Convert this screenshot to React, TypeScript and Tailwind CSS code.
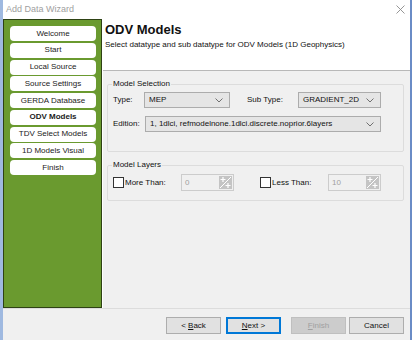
import React from "react";

const font = { fontFamily: '"Liberation Sans", Arial, sans-serif' };

function Chevron() {
  return (
    <svg width="8" height="5" viewBox="0 0 8 5" className="shrink-0">
      <path d="M0.5 0.5 L4 4 L7.5 0.5" fill="none" stroke="#707070" strokeWidth="1" />
    </svg>
  );
}

function Select({ value, className }: { value: string; className: string }) {
  return (
    <div
      className={`h-[16px] flex items-center justify-between bg-[#e5e5e5] border border-[#acacac] pl-[4px] pr-[6px] text-[8px] text-[#111] ${className}`}
    >
      <span>{value}</span>
      <Chevron />
    </div>
  );
}

function SpinIcon() {
  return (
    <svg width="13" height="13" viewBox="0 0 13 13" className="shrink-0">
      <rect x="0" y="0" width="13" height="13" fill="#c4c4c4" />
      <path d="M1 12 L12 1" stroke="#ffffff" strokeWidth="1" />
      <path d="M1.5 3.5 H6.5 M4 1 V6" stroke="#ffffff" strokeWidth="1.2" />
      <path d="M6.5 9.5 H11.5 M9 7 V12" stroke="#ffffff" strokeWidth="1.2" />
    </svg>
  );
}

function NumInput({ value }: { value: string }) {
  return (
    <div className="w-[53px] h-[17px] flex items-center justify-between bg-[#f0f0f0] border border-[#cccccc] pl-[3px] pr-[1px] text-[8px] text-[#a0a0a0]">
      <span>{value}</span>
      <SpinIcon />
    </div>
  );
}

function Checkbox() {
  return <div className="w-[11px] h-[11px] border border-[#333333] bg-white shrink-0" />;
}

const steps = [
  "Welcome",
  "Start",
  "Local Source",
  "Source Settings",
  "GERDA Database",
  "ODV Models",
  "TDV Select Models",
  "1D Models Visual",
  "Finish",
];

function Btn({
  children,
  variant = "normal",
}: {
  children: React.ReactNode;
  variant?: "normal" | "primary" | "disabled";
}) {
  const cls =
    variant === "primary"
      ? "bg-[#e1e1e1] border-[2px] border-[#0078d7] text-[#111]"
      : variant === "disabled"
      ? "bg-[#cccccc] border border-[#bfbfbf] text-[#a0a0a0]"
      : "bg-[#e1e1e1] border border-[#adadad] text-[#111]";
  return (
    <div className={`w-[55px] h-[17px] flex items-center justify-center text-[8px] ${cls}`}>
      <span className="whitespace-pre">{children}</span>
    </div>
  );
}

export default function App() {
  return (
    <div
      style={font}
      className="w-[412px] h-[340px] bg-white border-l-[3px] border-l-[#9fb9e0] border-r-[2px] border-r-[#6a8cc6] flex flex-col overflow-hidden"
    >
      {/* Title bar */}
      <div className="h-[19px] shrink-0 flex items-center justify-between pl-[3px] pr-[5px] bg-white">
        <span className="text-[9px] text-[#a0a0a0]">Add Data Wizard</span>
        <svg width="9" height="9" viewBox="0 0 9 9">
          <path d="M0.5 0.5 L8.5 8.5 M8.5 0.5 L0.5 8.5" stroke="#8a8a8a" strokeWidth="0.9" />
        </svg>
      </div>

      {/* Main */}
      <div className="h-[289px] shrink-0 flex">
        {/* Sidebar */}
        <div className="w-[99px] shrink-0 bg-[#6a9a2f] border border-[#2e4214] pl-[6px] pt-[6px] flex flex-col gap-[1.75px]">
          {steps.map((s) => (
            <div
              key={s}
              className={`w-[86px] h-[15px] bg-white rounded-[4px] flex items-center justify-center text-[8px] text-[#1a1a1a] ${
                s === "ODV Models" ? "font-bold" : ""
              }`}
            >
              {s}
            </div>
          ))}
        </div>

        {/* Right column */}
        <div className="flex-1 flex flex-col border-l border-l-white">
          <div className="h-[52px] shrink-0 bg-white border-b border-b-[#b8b8b8] pl-[2px] pt-[3px]">
            <div className="text-[13px] leading-[16px] font-bold text-[#111]">ODV Models</div>
            <div className="text-[8px] leading-[10px] mt-[2px] text-[#111]">
              Select datatype and sub datatype for ODV Models (1D Geophysics)
            </div>
          </div>
          <div className="flex-1 bg-[#f0f0f0] pl-[4px] pr-[6px] pt-[8px] flex flex-col">
            <fieldset className="border border-[#dcdcdc] rounded-[2px] pl-[5px] pr-[4px] pt-[3px] pb-[19px] flex flex-col gap-[8px]">
              <legend className="text-[8px] leading-[10px] text-[#111] -ml-px px-px">Model Selection</legend>
              <div className="flex items-center text-[8px] text-[#111]">
                <span className="w-[31px]">Type:</span>
                <Select value="MEP" className="w-[86px]" />
                <span className="ml-[17px] w-[51px]">Sub Type:</span>
                <Select value="GRADIENT_2D" className="w-[83px]" />
              </div>
              <div className="flex items-center text-[8px] text-[#111]">
                <span className="w-[32px]">Edition:</span>
                <Select value="1, 1dlci, refmodelnone.1dlci.discrete.noprior.6layers" className="w-[236px]" />
              </div>
            </fieldset>

            <fieldset className="mt-[8px] border border-[#dcdcdc] rounded-[2px] pl-[5px] pt-[4px] pb-[9px]">
              <legend className="text-[8px] leading-[10px] text-[#111] -ml-px px-px">Model Layers</legend>
              <div className="flex items-center text-[8px] text-[#111]">
                <Checkbox />
                <span className="ml-[1px] w-[56px]">More Than:</span>
                <NumInput value="0" />
                <div className="ml-[26px] flex items-center">
                  <Checkbox />
                  <span className="ml-[1px] w-[56px]">Less Than:</span>
                </div>
                <NumInput value="10" />
              </div>
            </fieldset>
          </div>
        </div>
      </div>

      {/* Footer */}
      <div className="flex-1 bg-[#f0f0f0] border-t border-t-[#dcdcdc] pt-[8px] pr-[6px] flex justify-end">
        <div className="flex h-[17px]">
          <Btn>
            {"< "}
            <u>B</u>ack
          </Btn>
          <div className="ml-[5px]">
            <Btn variant="primary">
              <u>N</u>
              {"ext >"}
            </Btn>
          </div>
          <div className="ml-[10px]">
            <Btn variant="disabled">
              <u>F</u>inish
            </Btn>
          </div>
          <div className="ml-[3px]">
            <Btn>Cancel</Btn>
          </div>
        </div>
      </div>
    </div>
  );
}
